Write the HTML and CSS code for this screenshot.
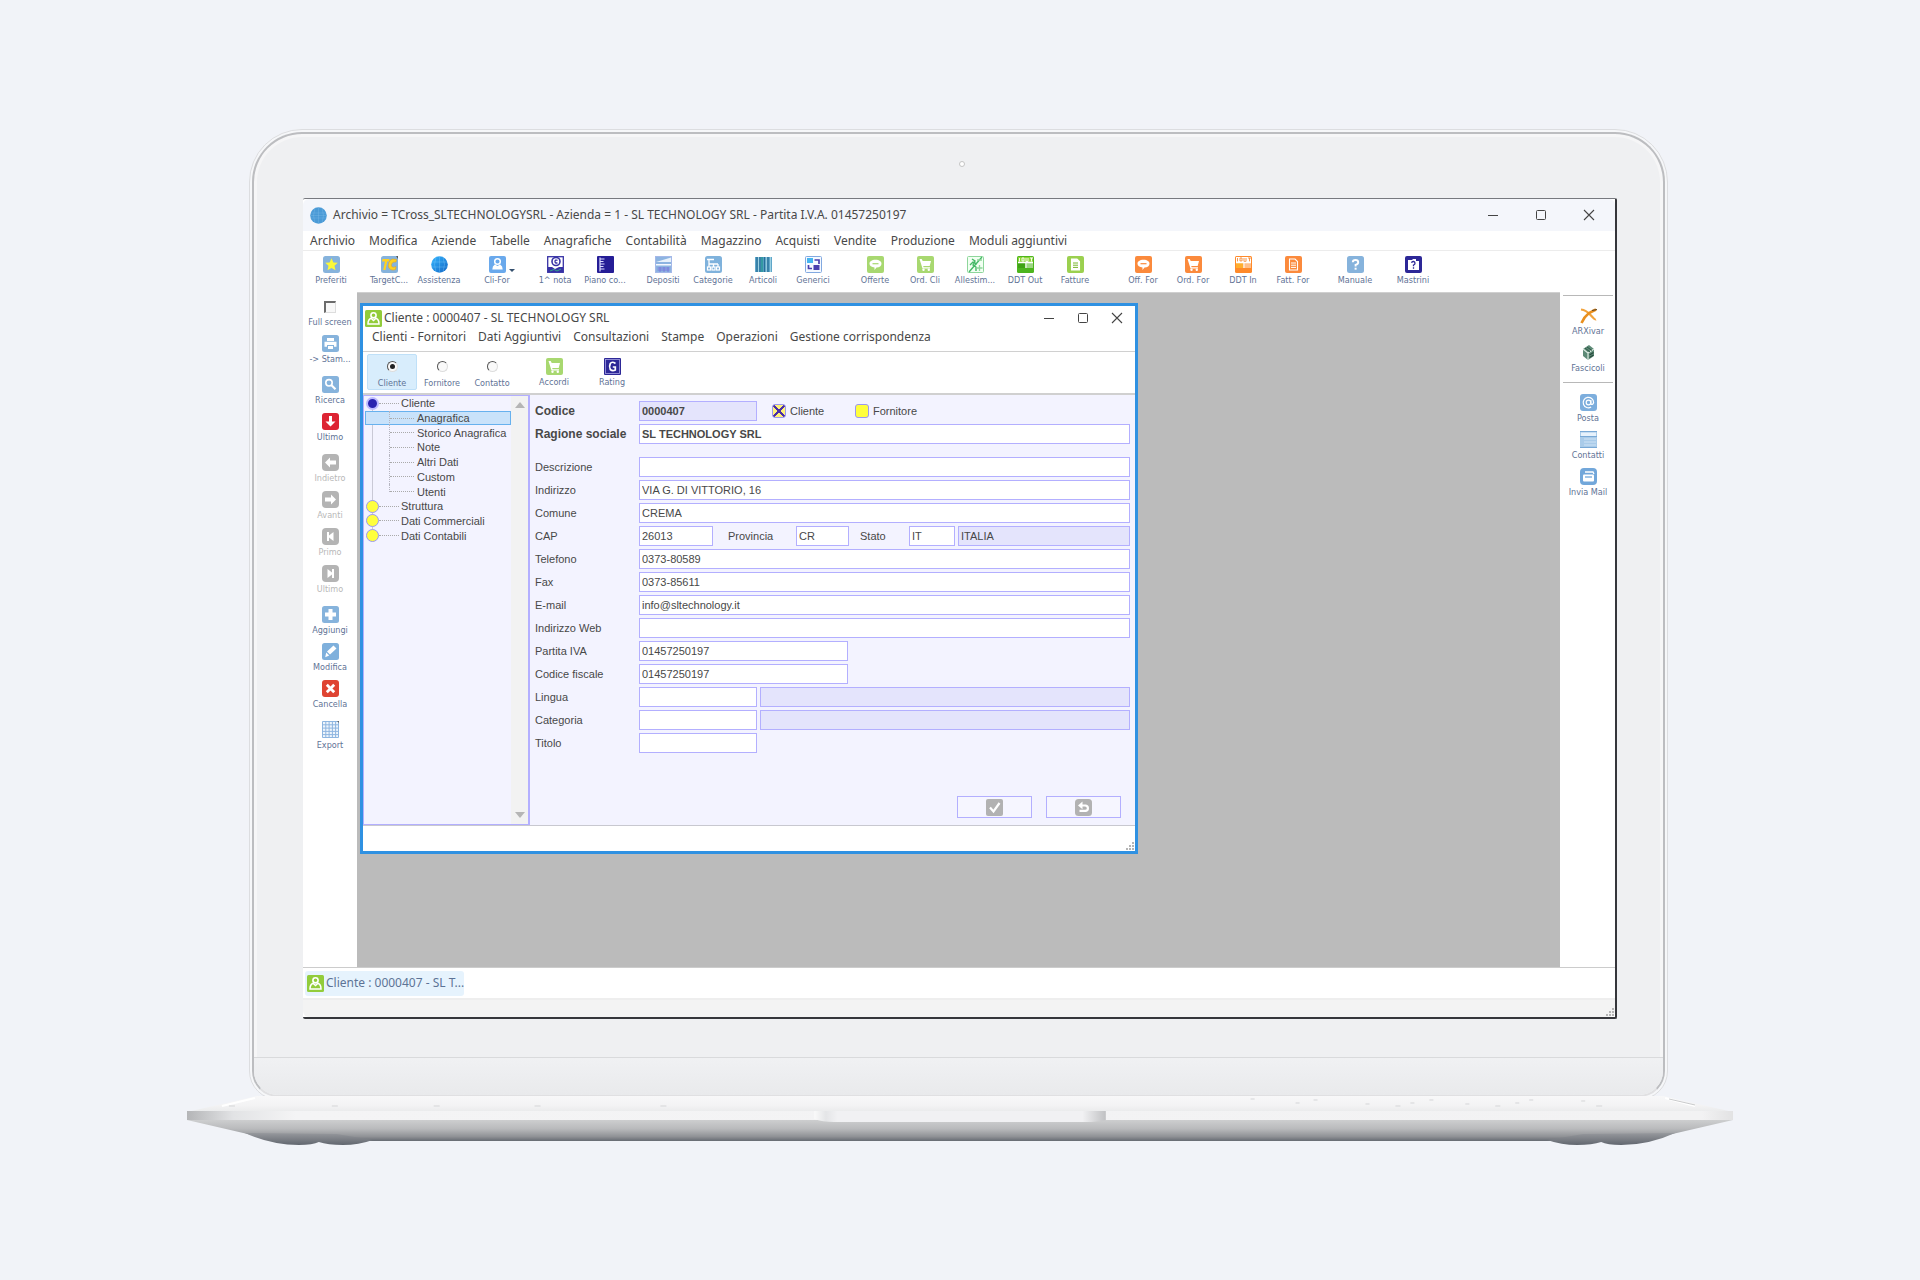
FILE: index.html
```html
<!DOCTYPE html>
<html lang="it">
<head>
<meta charset="utf-8">
<title>Archivio TCross - Cliente 0000407</title>
<link rel="stylesheet" href="styles.css">
</head>
<body>
<svg class="defs" aria-hidden="true">
  <defs>
    <linearGradient id="globeFill" x1="0" y1="0" x2="1" y2="1"><stop offset="0" stop-color="#35b6ff"/><stop offset="1" stop-color="#1265c4"/></linearGradient>
    <symbol id="i-star" viewBox="0 0 17 17"><rect width="17" height="17" rx="2.5" fill="#86b3dc"/><path d="M8.500 2.200l1.900 4.200 4.400.4-3.300 3 1 4.500-4-2.400-4 2.400 1-4.500-3.300-3 4.400-.4z" fill="#fbf838"/></symbol>
    <symbol id="i-target" viewBox="0 0 17 17"><rect width="17" height="17" rx="2.500" fill="#86b3dc"/><path d="M1.500 3h7L8 5.500H6.200L4.500 14H2.200L4 5.500H1z" fill="#ffd21f"/><path d="M15.500 3.500L12 3C8.500 3.500 7 7 7.500 11c1 3 4.500 3.500 7 2.500l.5-3c-2 1-4 1-4.500-.5C10.500 7 11.500 6 15 6z" fill="#ffd21f" stroke="#e8a51c" stroke-width=".6"/><path d="M15 0l2 0v3z" fill="#555"/></symbol>
    <symbol id="i-globe" viewBox="0 0 17 17"><circle cx="8.500" cy="8.500" r="8.300" fill="url(#globeFill)"/><path d="M1 6h15M1 11h15M8.500 0v17M5 1Q2 8.500 5 16M12 1q3 7.500 0 15" fill="none" stroke="#8fd6ff" stroke-width=".5" opacity=".6"/></symbol>
    <symbol id="i-world" viewBox="0 0 17 17"><circle cx="8.500" cy="8.500" r="8.300" fill="#4a9ad6"/><path d="M1 6h15M0 8.500h17M1 11h15M8.500 0v17M5 1Q2 8.500 5 16M12 1q3 7.500 0 15" fill="none" stroke="#7fbde8" stroke-width=".6" opacity=".6"/></symbol>
    <symbol id="i-user" viewBox="0 0 17 17"><rect width="17" height="17" rx="2" fill="#6aa9ec"/><circle cx="8.500" cy="5.500" r="2.800" fill="none" stroke="#fff" stroke-width="1.500"/><path d="M5.800 8.500Q3.300 9.800 3.300 13.500h10.400q0-3.700-2.500-5L8.500 10z" fill="#fff"/></symbol>
    <symbol id="i-client" viewBox="0 0 17 17"><rect width="17" height="17" rx="1.500" fill="#92cc3b"/><circle cx="8.500" cy="5.300" r="2.600" fill="none" stroke="#fff" stroke-width="1.600"/><path d="M6 8.300Q3 9.500 3 14h11q0-4.500-3-5.700L8.500 10.500z" fill="none" stroke="#fff" stroke-width="1.500"/></symbol>
    <symbol id="i-note" viewBox="0 0 17 17"><rect x=".7" y=".7" width="15.600" height="15.600" fill="#fff" stroke="#3732a5" stroke-width="1.300"/><circle cx="9" cy="5.500" r="4" fill="#fff" stroke="#3732a5" stroke-width="1.600"/><path d="M10.500 4.300Q8 3.500 8 5.500t2.500 1.300" fill="none" stroke="#3732a5" stroke-width="1.300"/><path d="M1 11h4l3 2 4-2h4v5H1z" fill="#3732a5"/><path d="M3 15l4-1.500 3 1.500 4-2" stroke="#35a58c" fill="none"/></symbol>
    <symbol id="i-plan" viewBox="0 0 17 17"><rect width="17" height="17" rx="1" fill="#251d96"/><path d="M3 1.500v14M3.500 3h4M3.500 5.500h3M3.500 8h4M3.500 10.500h3M3.500 13h4" stroke="#dcdcff" stroke-width="1.200"/></symbol>
    <symbol id="i-depot" viewBox="0 0 17 17"><rect x=".5" y=".5" width="16" height="16" fill="#8db4e1" stroke="#a4b8e8"/><path d="M1 6l15-4.500V6z" fill="#e8f1fb"/><path d="M1 8h15v1.500H1z" fill="#f5f8ff"/><path d="M2.500 12h12M2.500 14h12M5 11v5M9 11v5M13 11v5" stroke="#7878dd" stroke-width=".9"/></symbol>
    <symbol id="i-cat" viewBox="0 0 17 17"><rect width="17" height="17" rx="2.500" fill="#7fb2dc"/><path d="M2 3.500h7M4 3v5M4 8h9M4 8v3M8.500 8v3M13 8v3" stroke="#fff" stroke-width="1.300" fill="none"/><g fill="none" stroke="#fff" stroke-width="1.200"><rect x="2.500" y="11" width="3" height="3"/><rect x="7" y="11" width="3" height="3"/><rect x="11.500" y="11" width="3" height="3"/></g></symbol>
    <symbol id="i-bars" viewBox="0 0 17 17"><rect y="1" width="17" height="15" fill="#5fa6c9"/><path d="M2 1v15M5 1v15M9.500 1v15M13 1v15" stroke="#266f99" stroke-width="1.300"/><path d="M3.500 1v15M11.300 1v15M15.500 1v15" stroke="#afdcea" stroke-width=".8"/><path d="M7 1v15" stroke="#269494" stroke-width="1.500"/></symbol>
    <symbol id="i-gen" viewBox="0 0 17 17"><rect x=".5" y=".5" width="16" height="16" rx="1" fill="#f5f9ff" stroke="#82a9e0"/><rect x="2" y="2" width="6" height="5" fill="#45b4ef"/><rect x="8.500" y="9" width="6" height="5" fill="#4a3fae"/><path d="M9.500 4h4.500V8M7 12.500H3.500V9" fill="none" stroke="#4a3fae" stroke-width="1.700"/></symbol>
    <symbol id="i-offer" viewBox="0 0 17 17"><rect width="17" height="17" rx="2" fill="var(--tile)"/><path d="M8.500 3.800c3.800 0 6 1.700 6 3.900s-2 3.900-5 3.900L7.500 14v-2.500C4.500 11.200 2.500 9.700 2.500 7.700c0-2.200 2.200-3.900 6-3.900z" fill="#fff"/><path d="M5.500 7.700h6" stroke="var(--tile)" stroke-width="1.200"/></symbol>
    <symbol id="i-cart" viewBox="0 0 17 17"><rect width="17" height="17" rx="2" fill="var(--tile)"/><path d="M2.500 3h2.200l1 2H14l-1.300 5H6.200l.4 1.200H13V12.500H5.500z" fill="#fff"/><circle cx="6.500" cy="13.800" r="1.200" fill="#fff"/><circle cx="11.800" cy="13.800" r="1.200" fill="#fff"/></symbol>
    <symbol id="i-allest" viewBox="0 0 17 17"><rect x=".5" y=".5" width="16" height="16" rx="1" fill="#f1fff2" stroke="#8ed69b"/><path d="M15 1L2 16M5 3l3 2-2 4 3 2v4M3 9l3-3 4 2" fill="none" stroke="#45b966" stroke-width="1.400"/><path d="M9.500 12h6M12.500 9v6M10 4h5" stroke="#8ed69b" stroke-width="1.300"/></symbol>
    <symbol id="i-ddt" viewBox="0 0 17 17"><rect width="17" height="17" rx="1.500" fill="var(--tile)"/><rect x="1" y="1" width="15" height="5" fill="var(--band)"/><path d="M2.500 2v3.500M5 2h2v3H5zM9 2v3.500h2V2M13 2h3M14.500 2v3.500" stroke="var(--mark)" fill="none" stroke-width=".9"/><path d="M1 7h7v5H1z" fill="var(--box)"/><path d="M10 7h6v5h-6z" fill="#fff" opacity=".45"/><path d="M9 6.500V12M1 6.500h15" stroke="#fff" stroke-width="1.400"/></symbol>
    <symbol id="i-doc" viewBox="0 0 17 17"><rect width="17" height="17" rx="2" fill="var(--tile)"/><path d="M4.500 3h5.500l2.500 2.500V14h-8z" fill="var(--page)" stroke="#fff" stroke-width="1.100"/><path d="M6 7h5M6 9.200h5M6 11.400h5" stroke="var(--lines)" stroke-width="1"/></symbol>
    <symbol id="i-help" viewBox="0 0 17 17"><rect width="17" height="17" rx="2.500" fill="#86b3dc"/><path d="M5.800 6.300Q5.800 4 8.500 4t2.700 2.200Q11.200 8 8.600 8.800V10.500" fill="none" stroke="#fff" stroke-width="1.900"/><rect x="7.600" y="11.700" width="2" height="2" fill="#fff"/></symbol>
    <symbol id="i-mast" viewBox="0 0 17 17"><rect width="17" height="17" rx="2" fill="#2d2897"/><path d="M3 4h4l1-1h3v2h3v9H3z" fill="#fff"/><path d="M6.500 6.800Q7 5.300 8.500 5.500t1.500 1.700Q10 8.500 8.500 9v1.200M8.500 11.200v1.500" fill="none" stroke="#2d2897" stroke-width="1.300"/></symbol>
    <symbol id="i-print" viewBox="0 0 17 17"><rect width="17" height="17" rx="2.500" fill="#86b3dc"/><path d="M5 3h7v3H5zM2.500 6.800h12v5H12V10H5v1.800H2.500zM6 11h5v3H6z" fill="#fff"/></symbol>
    <symbol id="i-find" viewBox="0 0 17 17"><rect width="17" height="17" rx="2.500" fill="#86b3dc"/><circle cx="7" cy="6.800" r="3.200" fill="none" stroke="#fff" stroke-width="1.600"/><path d="M9.500 9.300l4 4" stroke="#fff" stroke-width="2.200"/></symbol>
    <symbol id="i-down" viewBox="0 0 17 17"><rect width="17" height="17" rx="3" fill="#dd2433"/><path d="M7 3h3v5.500h3.500l-5 5-5-5H7z" fill="#fff"/></symbol>
    <symbol id="i-left" viewBox="0 0 17 17"><rect width="17" height="17" rx="4" fill="#b4b4b4"/><path d="M8 3.500v3h6v4H8v3l-5-5z" fill="#fff"/></symbol>
    <symbol id="i-right" viewBox="0 0 17 17"><rect width="17" height="17" rx="4" fill="#b4b4b4"/><path d="M9 3.500v3H3v4h6v3l5-5z" fill="#fff"/></symbol>
    <symbol id="i-first" viewBox="0 0 17 17"><rect width="17" height="17" rx="4" fill="#b4b4b4"/><path d="M5 4h2v3.500L11.500 4v9L7 9.500V13H5z" fill="#fff"/></symbol>
    <symbol id="i-last" viewBox="0 0 17 17"><rect width="17" height="17" rx="4" fill="#b4b4b4"/><path d="M5.500 4L10 7.500V4h2v9h-2V9.500L5.500 13z" fill="#fff"/></symbol>
    <symbol id="i-plus" viewBox="0 0 17 17"><rect width="17" height="17" rx="2.500" fill="#86b3dc"/><path d="M6.500 3h4v3.500H14v4h-3.500V14h-4v-3.500H3v-4h3.500z" fill="#fff"/></symbol>
    <symbol id="i-edit" viewBox="0 0 17 17"><rect width="17" height="17" rx="2.500" fill="#7fb0dc"/><path d="M11.500 2.500l3 3-6.500 6-3-3zM4.200 9.500l3 3-4 1.800z" fill="#fff"/></symbol>
    <symbol id="i-del" viewBox="0 0 17 17"><rect width="17" height="17" rx="3" fill="#df4432"/><path d="M4.800 4.800l7.400 7.400M12.200 4.800l-7.400 7.400" stroke="#fff" stroke-width="2.800"/></symbol>
    <symbol id="i-grid" viewBox="0 0 17 17"><path d="M.5.500h16v16H.5zM3.800.5v16M7.100.5v16M10.400.5v16M13.600.5v16M.5 3.800h16M.5 7.100h16M.5 10.400h16M.5 13.600h16" fill="#eef5fc" stroke="#8eb6e0"/><path d="M15 0h2v2z" fill="#666"/></symbol>
    <symbol id="i-arx" viewBox="0 0 17 17"><path d="M1 2.500Q6 3 10.500 8T16 12.500" fill="none" stroke="#f2a33c" stroke-width="2.200"/><path d="M16 2.500L9 6Q4 10 1.500 16" fill="none" stroke="#e98f1e" stroke-width="2.600"/><path d="M12 3.500l5-1" stroke="#5d4320" stroke-width="1.200"/></symbol>
    <symbol id="i-files" viewBox="0 0 17 17"><path d="M3 5l6-4 5 4v7l-6 4-5-4z" fill="#5d8a76"/><path d="M3 5l5 4v7M8 9l6-4" fill="none" stroke="#dbe9e0" stroke-width="1.200"/><path d="M5 4l5 4M7 3l5 3.500" stroke="#2c5745"/><path d="M9.500 11l4-2.500M9.500 13.500l4-2.500" stroke="#274b3c" stroke-width="1.300"/></symbol>
    <symbol id="i-at" viewBox="0 0 17 17"><rect width="17" height="17" rx="3" fill="#7daedd"/><circle cx="8.500" cy="8.500" r="2.300" fill="none" stroke="#fff" stroke-width="1.200"/><path d="M10.900 6v4.200q2 1 2.700-1.700a5.200 5.200 0 1 0-2.500 4.500" fill="none" stroke="#fff" stroke-width="1.200"/></symbol>
    <symbol id="i-contacts" viewBox="0 0 17 17"><rect width="17" height="17" fill="#a9cbe9"/><path d="M0 .5h17M0 5.500h17M0 16.500h17" stroke="#79a9d6"/><rect x="1" y="1.500" width="15" height="3.500" fill="#e7f2fc"/><path d="M4 8h12M4 11h12M4 14h12" stroke="#cfe3f5"/></symbol>
    <symbol id="i-mail" viewBox="0 0 17 17"><rect width="17" height="17" rx="4" fill="#72a7da"/><rect x="3" y="6.500" width="11" height="7" rx="1" fill="#fff"/><path d="M5 4h8l1 2M5 9h5" stroke="#fff" stroke-width="1.300" fill="none"/><path d="M5 9h7" stroke="#72a7da" stroke-width="1.300"/></symbol>
    <symbol id="i-rating" viewBox="0 0 17 17"><rect width="17" height="17" rx="1" fill="#2d2897"/><rect x="1.500" y="1.500" width="14" height="14" fill="none" stroke="#a7a4e3" stroke-width=".8"/><path d="M11.500 5.500Q8 3 6.300 5.500 4.800 8.500 6.300 11.500 8.500 13.500 11.300 12V9H8.800" fill="none" stroke="#fff" stroke-width="1.700"/></symbol>
    <symbol id="i-ok" viewBox="0 0 17 17"><rect width="17" height="17" rx="2" fill="#b2b2b2"/><path d="M4 8.500l3.500 4L13.500 4" fill="none" stroke="#fff" stroke-width="2.200"/></symbol>
    <symbol id="i-undo" viewBox="0 0 17 17"><rect width="17" height="17" rx="3.500" fill="#b2b2b2"/><path d="M7.500 2.500v3H11q3 .5 3 3.700t-3 3.800H4.500v-2.200H10q1.800 0 1.800-1.600T10 7.600H7.500v2.700L3 6.400z" fill="#fff"/></symbol>
    <symbol id="i-min" viewBox="0 0 12 12"><path d="M1 6.500h10" stroke="#444"/></symbol>
    <symbol id="i-max" viewBox="0 0 12 12"><rect x="1.500" y="1.500" width="9" height="9" rx="1" fill="none" stroke="#444"/></symbol>
    <symbol id="i-close" viewBox="0 0 12 12"><path d="M1 1l10 10M11 1L1 11" stroke="#444" stroke-width="1.100"/></symbol>
    <symbol id="i-grip" viewBox="0 0 10 10"><path d="M7 1h2v2H7zM4 4h2v2H4zM7 4h2v2H7zM1 7h2v2H1zM4 7h2v2H4zM7 7h2v2H7z" fill="#b5b5b5"/></symbol>
  </defs>
</svg>

<main class="laptop">
  <div class="lid">
    <div class="bezel">
      <span class="camera"></span>
      <div class="app">
        <header class="titlebar">
          <svg class="app-icon"><use href="#i-world"/></svg>
          <h1 class="app-title">Archivio = TCross_SLTECHNOLOGYSRL - Azienda = 1 - SL TECHNOLOGY SRL - Partita I.V.A. 01457250197</h1>
          <div class="controls controls-app">
            <button aria-label="Riduci a icona"><svg><use href="#i-min"/></svg></button>
            <button aria-label="Ingrandisci"><svg><use href="#i-max"/></svg></button>
            <button aria-label="Chiudi"><svg><use href="#i-close"/></svg></button>
          </div>
        </header>
        <nav class="menubar">
          <button>Archivio</button><button>Modifica</button><button>Aziende</button><button>Tabelle</button><button>Anagrafiche</button><button>Contabilità</button><button>Magazzino</button><button>Acquisti</button><button>Vendite</button><button>Produzione</button><button>Moduli aggiuntivi</button>
        </nav>
        <div class="toolbar">
          <button class="tool"><svg><use href="#i-star"/></svg>Preferiti</button>
          <button class="tool apart"><svg><use href="#i-target"/></svg>TargetC...</button>
          <button class="tool"><svg><use href="#i-globe"/></svg>Assistenza</button>
          <button class="tool apart has-menu"><svg><use href="#i-user"/></svg>Cli-For</button>
          <button class="tool apart"><svg><use href="#i-note"/></svg>1^ nota</button>
          <button class="tool"><svg><use href="#i-plan"/></svg>Piano co...</button>
          <button class="tool apart"><svg><use href="#i-depot"/></svg>Depositi</button>
          <button class="tool"><svg><use href="#i-cat"/></svg>Categorie</button>
          <button class="tool"><svg><use href="#i-bars"/></svg>Articoli</button>
          <button class="tool"><svg><use href="#i-gen"/></svg>Generici</button>
          <button class="tool far sales"><svg><use href="#i-offer"/></svg>Offerte</button>
          <button class="tool sales"><svg><use href="#i-cart"/></svg>Ord. Cli</button>
          <button class="tool"><svg><use href="#i-allest"/></svg>Allestim...</button>
          <button class="tool ddt-out"><svg><use href="#i-ddt"/></svg>DDT Out</button>
          <button class="tool invoice"><svg><use href="#i-doc"/></svg>Fatture</button>
          <button class="tool farther buy"><svg><use href="#i-offer"/></svg>Off. For</button>
          <button class="tool buy"><svg><use href="#i-cart"/></svg>Ord. For</button>
          <button class="tool ddt-in"><svg><use href="#i-ddt"/></svg>DDT In</button>
          <button class="tool buy"><svg><use href="#i-doc"/></svg>Fatt. For</button>
          <button class="tool far"><svg><use href="#i-help"/></svg>Manuale</button>
          <button class="tool apart"><svg><use href="#i-mast"/></svg>Mastrini</button>
        </div>
        <div class="body">
          <aside class="side side-left">
            <label class="side-check"><input type="checkbox" class="box3d">Full screen</label>
            <div class="side-group">
              <button class="tool"><svg><use href="#i-print"/></svg>-&gt; Stam...</button>
            </div>
            <div class="side-group">
              <button class="tool"><svg><use href="#i-find"/></svg>Ricerca</button>
              <button class="tool"><svg><use href="#i-down"/></svg>Ultimo</button>
            </div>
            <div class="side-group">
              <button class="tool" disabled><svg><use href="#i-left"/></svg>Indietro</button>
              <button class="tool" disabled><svg><use href="#i-right"/></svg>Avanti</button>
              <button class="tool" disabled><svg><use href="#i-first"/></svg>Primo</button>
              <button class="tool" disabled><svg><use href="#i-last"/></svg>Ultimo</button>
            </div>
            <div class="side-group">
              <button class="tool"><svg><use href="#i-plus"/></svg>Aggiungi</button>
              <button class="tool"><svg><use href="#i-edit"/></svg>Modifica</button>
              <button class="tool"><svg><use href="#i-del"/></svg>Cancella</button>
            </div>
            <div class="side-group">
              <button class="tool"><svg><use href="#i-grid"/></svg>Export</button>
            </div>
          </aside>

          <div class="workspace">
            <section class="window">
              <header class="window-title">
                <svg class="app-icon"><use href="#i-client"/></svg>
                <h2>Cliente : 0000407 - SL TECHNOLOGY SRL</h2>
                <div class="controls controls-window">
                  <button aria-label="Riduci a icona"><svg><use href="#i-min"/></svg></button>
                  <button aria-label="Ingrandisci"><svg><use href="#i-max"/></svg></button>
                  <button aria-label="Chiudi"><svg><use href="#i-close"/></svg></button>
                </div>
              </header>
              <nav class="menubar window-menu">
                <button>Clienti - Fornitori</button><button>Dati Aggiuntivi</button><button>Consultazioni</button><button>Stampe</button><button>Operazioni</button><button>Gestione corrispondenza</button>
              </nav>
              <div class="window-tools">
                <label class="mode"><input type="radio" name="mode" checked>Cliente</label>
                <label class="mode"><input type="radio" name="mode">Fornitore</label>
                <label class="mode"><input type="radio" name="mode">Contatto</label>
                <button class="tool far sales"><svg><use href="#i-cart"/></svg>Accordi</button>
                <button class="tool apart"><svg><use href="#i-rating"/></svg>Rating</button>
              </div>
              <div class="window-body">
                <div class="tree">
                  <ul class="tree-list">
                    <li class="node open"><span class="branch"></span>Cliente</li>
                    <li class="leaf selected"><span class="branch"></span>Anagrafica</li>
                    <li class="leaf"><span class="branch"></span>Storico Anagrafica</li>
                    <li class="leaf"><span class="branch"></span>Note</li>
                    <li class="leaf"><span class="branch"></span>Altri Dati</li>
                    <li class="leaf"><span class="branch"></span>Custom</li>
                    <li class="leaf last"><span class="branch"></span>Utenti</li>
                    <li class="node"><span class="branch"></span>Struttura</li>
                    <li class="node"><span class="branch"></span>Dati Commerciali</li>
                    <li class="node"><span class="branch"></span>Dati Contabili</li>
                  </ul>
                  <div class="scrollbar"><span class="arrow-up"></span><span class="arrow-down"></span></div>
                </div>
                <form class="form">
                  <div class="row strong"><label for="codice">Codice</label>
                    <input id="codice" class="w-code shaded" value="0000407" readonly>
                    <label class="tick tick-first"><input type="checkbox" checked>Cliente</label>
                    <label class="tick"><input type="checkbox">Fornitore</label>
                  </div>
                  <div class="row strong spaced"><label for="ragione">Ragione sociale</label><input id="ragione" class="grow" value="SL TECHNOLOGY SRL"></div>
                  <div class="row"><label for="descr">Descrizione</label><input id="descr" class="grow"></div>
                  <div class="row"><label for="ind">Indirizzo</label><input id="ind" class="grow" value="VIA G. DI VITTORIO, 16"></div>
                  <div class="row"><label for="comune">Comune</label><input id="comune" class="grow" value="CREMA"></div>
                  <div class="row"><label for="cap">CAP</label><input id="cap" class="w-cap" value="26013">
                    <label class="inline-label prov" for="prov">Provincia</label><input id="prov" class="w-prov" value="CR">
                    <label class="inline-label stato" for="stato">Stato</label><input id="stato" class="w-stato" value="IT"><input class="grow shaded" aria-label="Nome stato" value="ITALIA" readonly></div>
                  <div class="row"><label for="tel">Telefono</label><input id="tel" class="grow" value="0373-80589"></div>
                  <div class="row"><label for="fax">Fax</label><input id="fax" class="grow" value="0373-85611"></div>
                  <div class="row"><label for="email">E-mail</label><input id="email" class="grow" value="info@sltechnology.it"></div>
                  <div class="row"><label for="web">Indirizzo Web</label><input id="web" class="grow"></div>
                  <div class="row"><label for="piva">Partita IVA</label><input id="piva" class="w-tax" value="01457250197"></div>
                  <div class="row"><label for="cf">Codice fiscale</label><input id="cf" class="w-tax" value="01457250197"></div>
                  <div class="row"><label for="lingua">Lingua</label><input id="lingua" class="w-code"><input class="grow shaded" aria-label="Descrizione lingua" readonly></div>
                  <div class="row"><label for="categoria">Categoria</label><input id="categoria" class="w-code"><input class="grow shaded" aria-label="Descrizione categoria" readonly></div>
                  <div class="row"><label for="titolo">Titolo</label><input id="titolo" class="w-code"></div>
                  <div class="actions">
                    <button type="button" aria-label="Conferma"><svg><use href="#i-ok"/></svg></button>
                    <button type="button" aria-label="Annulla"><svg><use href="#i-undo"/></svg></button>
                  </div>
                </form>
              </div>
              <footer class="window-foot"><svg class="grip"><use href="#i-grip"/></svg></footer>
            </section>
          </div>

          <aside class="side side-right">
            <div class="side-group ruled">
              <button class="tool"><svg><use href="#i-arx"/></svg>ARXivar</button>
              <button class="tool"><svg><use href="#i-files"/></svg>Fascicoli</button>
            </div>
            <div class="side-group ruled">
              <button class="tool"><svg><use href="#i-at"/></svg>Posta</button>
              <button class="tool"><svg><use href="#i-contacts"/></svg>Contatti</button>
              <button class="tool"><svg><use href="#i-mail"/></svg>Invia Mail</button>
            </div>
          </aside>
        </div>
        <div class="taskbar">
          <button class="task"><svg class="app-icon"><use href="#i-client"/></svg>Cliente : 0000407 - SL T...</button>
        </div>
        <footer class="statusbar"><svg class="grip"><use href="#i-grip"/></svg></footer>
      </div>
    </div>
    <div class="chin"></div>
  </div>
  <svg class="base" viewBox="0 0 1548 50" preserveAspectRatio="none" aria-hidden="true">
    <defs>
      <linearGradient id="deck" x1="0" y1="0" x2="0" y2="1"><stop offset="0" stop-color="#f8f8f9"/><stop offset=".6" stop-color="#f3f3f4"/><stop offset="1" stop-color="#e9eaeb"/></linearGradient>
      <linearGradient id="edge" x1="0" y1="0" x2="1" y2="0"><stop offset="0" stop-color="#b4b5b7"/><stop offset=".03" stop-color="#e2e3e5"/><stop offset=".07" stop-color="#f4f4f5"/><stop offset=".98" stop-color="#f2f2f3"/><stop offset="1" stop-color="#e2e2e3"/></linearGradient>
      <linearGradient id="under" x1="0" y1="24" x2="0" y2="46" gradientUnits="userSpaceOnUse"><stop offset="0" stop-color="#cdcecf"/><stop offset=".4" stop-color="#b9babc"/><stop offset=".75" stop-color="#909296"/><stop offset="1" stop-color="#5d626b"/></linearGradient>
      <linearGradient id="foot" x1="0" y1="36" x2="0" y2="50" gradientUnits="userSpaceOnUse"><stop offset="0" stop-color="#9b9da1"/><stop offset="1" stop-color="#5d626b"/></linearGradient>
      <linearGradient id="notch" x1="0" y1="0" x2="1" y2="0"><stop offset="0" stop-color="#fafafa"/><stop offset=".04" stop-color="#e4e5e7"/><stop offset=".08" stop-color="#f1f1f3"/><stop offset=".92" stop-color="#f1f1f3"/><stop offset="1" stop-color="#c0c1c3"/></linearGradient>
    </defs>
    <path d="M70 0H1478L1548 16H0z" fill="url(#deck)"/>
    <path d="M68 2L35 10M1480 2L1510 10" stroke="#fff" stroke-width="2"/>
    <path d="M1484 3l26 6" stroke="#c9cacc" stroke-width="1"/>
    <g stroke="#d5d6d8" stroke-width="1"><path d="M42 10h6M145 10h6M247 10h6M348 10h6M474 10h6M1065 3h4M1110 7h4M1128 4h4M1180 8h4M1210 10h5M1225 7h4M1244 4h4M1280 8h4M1310 10h5M1330 7h4M1344 4h4M1396 5h4M1411 10h6"/></g>
    <path d="M0 24L65 39L90 45H1460L1483 39L1548 24z" fill="url(#under)"/>
    <path d="M58 37Q84 49 112 49q14 0 20-3q9 3 24 3q16 0 30-5L150 38zM1490 37Q1464 49 1436 49q-14 0-20-3q-9 3-24 3q-16 0-30-5L1398 38z" fill="url(#foot)"/>
    <path d="M0 15H1548V24H0z" fill="url(#edge)"/>
    <path d="M628 15H920V24Q912 26 900 26H648Q636 26 628 23z" fill="url(#notch)"/>
  </svg>
</main>
</body>
</html>
```

FILE: styles.css
```css
*, *::before, *::after { box-sizing: border-box; }

:root {
  --ui: "Noto Sans", "Open Sans", sans-serif;
  --small: "DejaVu Sans Condensed", "DejaVu Sans", sans-serif;
  --form: "Liberation Sans", sans-serif;
  --violet: #b3afff;
  --panel: #f3f3ff;
  --shade: #e4e4fc;
}

body {
  margin: 0;
  background: #f1f3f8;
  font-family: var(--ui);
  color: #484848;
}

h1, h2, ul { margin: 0; padding: 0; font-weight: 400; }
button { border: 0; padding: 0; background: none; font: inherit; color: inherit; }
.defs { position: absolute; width: 0; height: 0; }

/* laptop shell */
.laptop {
  display: flex;
  flex-direction: column;
  min-height: 100vh;
  padding: 132px 187px 134px;
}
.lid {
  flex: 1;
  display: flex;
  flex-direction: column;
  margin: 0 68px 0 65px;
  border: 2px solid #bcbdc0;
  border-bottom-color: #e0e0e2;
  border-radius: 50px 50px 26px 26px;
  outline: 1px solid #dcdde0;
  outline-offset: 2px;
  background: #eff0f2;
  box-shadow: inset 0 0 0 3px #f6f6f7, 0 0 0 3px #f6f7f9;
}
.bezel {
  flex: 1;
  display: flex;
  flex-direction: column;
  position: relative;
  padding: 64px 46px 38px 49px;
}
.camera {
  position: absolute;
  top: 27px;
  left: 50%;
  width: 6px;
  height: 6px;
  border: 1px solid #c4c4c4;
  border-radius: 50%;
  background: #fff;
}
.chin {
  height: 38px;
  border-top: 1px solid #d9dadc;
  border-radius: 0 0 24px 24px;
  background: linear-gradient(#f0f1f3, #e9eaec);
}
.base { display: block; width: 100%; height: 50px; margin-top: -1px; }

/* application frame */
.app {
  flex: 1;
  display: flex;
  flex-direction: column;
  border: solid #35363b;
  border-width: 1px 2px 2px 0;
  border-top-color: #77797f;
  border-radius: 2px;
  background: #fff;
}
.titlebar {
  display: flex;
  align-items: center;
  height: 32px;
  padding-left: 7px;
  background: #f4f6fb;
  border-radius: 6px 6px 0 0;
}
.app-icon { width: 17px; height: 17px; flex: none; }
.app-title { margin-left: 6px; font-size: 12px; line-height: 16px; white-space: nowrap; }
.controls { display: flex; margin-left: auto; }
.controls svg { display: block; width: 12px; height: 12px; }
.controls-app { gap: 36px; padding-right: 20px; }
.controls-window { gap: 22px; padding-right: 12px; }

.menubar {
  display: flex;
  gap: 14px;
  height: 20px;
  padding-left: 7px;
  border-bottom: 1px solid #ececec;
  font-size: 12px;
  line-height: 16px;
  white-space: nowrap;
}

.toolbar { display: flex; height: 41px; padding: 5px 0 0 3px; }
.tool {
  display: flex;
  flex-direction: column;
  align-items: center;
  gap: 1px;
  width: 50px;
  flex: none;
  font-family: var(--small);
  font-size: 9px;
  line-height: 12px;
  white-space: nowrap;
  color: #5f7396;
}
.tool svg { width: 17px; height: 17px; }
.tool:disabled { color: #b8b8b8; }
.apart { margin-left: 8px; }
.far { margin-left: 12px; }
.farther { margin-left: 18px; }
.has-menu { position: relative; }
.has-menu::after {
  content: "";
  position: absolute;
  top: 13px;
  right: 7px;
  border: solid transparent;
  border-width: 3px 3px 0;
  border-top-color: #35506e;
}
.sales { --tile: #a8d870; }
.buy { --tile: #fb8a3c; --page: #fb8a3c; --lines: #fff; }
.invoice { --tile: #9bd04f; --page: #fff; --lines: #79b52c; }
.ddt-out { --tile: #4db51e; --band: #8dd636; --mark: #fff; --box: #3fa314; }
.ddt-in { --tile: #ff8a2a; --band: #fff; --mark: #f58a35; --box: #ffae2e; }

.body { flex: 1; display: flex; }
.side { display: flex; flex-direction: column; gap: 4px; flex: none; }
.side .tool { width: 100%; height: 37px; }
.side-left { width: 54px; padding-top: 9px; }
.side-check {
  display: flex;
  flex-direction: column;
  align-items: center;
  gap: 3px;
  height: 30px;
  font-family: var(--small);
  font-size: 9px;
  line-height: 12px;
  white-space: nowrap;
  color: #5f7396;
}
.box3d {
  appearance: none;
  width: 12px;
  height: 12px;
  margin: 0;
  border: 1px solid #ddd;
  border-width: 2px 1px 1px 2px;
  border-color: #6b6b6b #ddd #ddd #6b6b6b;
  background: #f8f8f8;
}
.side-right { width: 55px; padding: 3px 2px 0 3px; gap: 1px; }
.ruled { padding: 11px 0 0; border-top: 1px solid #b8b8b8; }

.workspace { flex: 1; padding: 10px 3px; background: #bbb; border-top: 1px solid #cfcfcf; }

.taskbar {
  display: flex;
  align-items: center;
  height: 31px;
  padding: 0 2px;
  border-top: 1px solid #ccc;
}
.task {
  display: flex;
  align-items: center;
  gap: 2px;
  height: 25px;
  padding: 0 0 0 2px;
  border-radius: 3px;
  background: #e6f3fd;
  font-size: 12px;
  line-height: 16px;
  color: #5d7396;
}
.statusbar {
  display: flex;
  align-items: flex-end;
  justify-content: flex-end;
  height: 19px;
  border-top: 2px solid #eee;
  background: #f3f3f3;
  border-radius: 0 0 6px 6px;
}
.grip { width: 10px; height: 10px; }

/* customer window */
.window {
  width: 65%;
  min-width: 776px;
  border: 3px solid #2f91e2;
  background: #fff;
}
.window-title { display: flex; align-items: center; height: 24px; padding-left: 2px; }
.window-title h2 { margin-left: 2px; font-size: 12px; line-height: 16px; }
.window-menu { gap: 12px; height: 22px; padding-left: 9px; border-bottom: 1px solid #d0d0d0; line-height: 14px; }
.window-menu button { align-self: flex-start; }
.window-tools { display: flex; height: 43px; padding: 2px 4px 0; border-bottom: 2px solid #d0d0d0; }
.mode {
  display: flex;
  flex-direction: column;
  align-items: center;
  gap: 5px;
  width: 50px;
  height: 36px;
  padding-top: 6px;
  border: 1px solid transparent;
  border-radius: 2px;
  font-family: var(--small);
  font-size: 9px;
  line-height: 12px;
  color: #5f7396;
}
.mode:has(:checked) { border-color: #bfe0f8; background: #d8edfc; }
.mode input {
  appearance: none;
  display: grid;
  place-items: center;
  width: 11px;
  height: 11px;
  margin: 0;
  border: 1px solid;
  border-color: #555 #ddd #ddd #555;
  border-radius: 50%;
  background: #fafafa;
}
.mode input:checked::after {
  content: "";
  width: 5px;
  height: 5px;
  border-radius: 50%;
  background: #222;
}
.window-tools .tool { padding-top: 4px; }

.window-body {
  display: flex;
  background: var(--panel);
  border-bottom: 1px solid #c8c8d0;
  font-family: var(--form);
  font-size: 11px;
  line-height: 14px;
}
.tree {
  display: flex;
  width: 167px;
  flex: none;
  border: 1px solid var(--violet);
  border-right-width: 2px;
}
.tree-list {
  position: relative;
  flex: 1;
  align-self: flex-start;
  display: grid;
  grid-auto-rows: 1fr;
  height: 147px;
  list-style: none;
  white-space: nowrap;
}
.tree-list::before {
  content: "";
  position: absolute;
  top: 8px;
  bottom: 8px;
  left: 8px;
  border-left: 1px solid #c9c9d6;
}
.node, .leaf { display: flex; align-items: center; position: relative; }
.node { padding-left: 2px; }
.node::before {
  content: "";
  width: 13px;
  height: 13px;
  border: 1px solid #9b98f0;
  border-radius: 50%;
  background: #ffff3c;
}
.node.open::before { border: 2px solid #bdbaff; background: #2a23b0; }
.node .branch { width: 20px; border-top: 1px dotted #aaa; margin-right: 2px; }
.leaf { padding-left: 25px; }
.leaf .branch { align-self: stretch; width: 26px; margin-right: 2px; border-left: 1px dotted #b5b5c0; display: flex; align-items: center; }
.leaf .branch::after { content: ""; width: 24px; border-top: 1px dotted #aaa; }
.leaf.last .branch { align-self: flex-start; height: 8px; align-items: flex-end; }
.selected { background: #c9e2fa; box-shadow: inset 0 0 0 1px #67b1ee; margin-left: 1px; padding-left: 24px; }
.scrollbar {
  display: flex;
  flex-direction: column;
  align-items: center;
  justify-content: space-between;
  width: 17px;
  padding: 6px 0;
  background: #f2f2f2;
}
.arrow-up, .arrow-down { border: solid transparent; }
.arrow-up { border-width: 0 5px 6px; border-bottom-color: #b5b5b5; }
.arrow-down { border-width: 6px 5px 0; border-top-color: #b5b5b5; }

.form {
  flex: 1;
  display: flex;
  flex-direction: column;
  gap: 3px;
  padding: 6px 5px 7px;
}
.row { display: flex; align-items: center; gap: 3px; }
.row > label:first-child { width: 101px; flex: none; }
.strong > label:first-child { font-size: 12px; font-weight: 700; }
.strong > input { font-weight: 700; }
.spaced { margin-bottom: 10px; }
.row > input {
  min-width: 0;
  height: 20px;
  padding: 0 2px 1px;
  border: 1px solid var(--violet);
  background: #fff;
  font-family: inherit;
  font-size: 11px;
  color: inherit;
}
.row > .shaded { background: var(--shade); }
.grow { flex: 1; }
.w-code { width: 118px; }
.w-cap { width: 74px; }
.w-prov { width: 53px; }
.w-stato { width: 46px; }
.w-tax { width: 209px; }
.inline-label.prov { width: 65px; margin-left: 12px; }
.inline-label.stato { width: 46px; margin-left: 8px; }
.tick { display: flex; align-items: center; gap: 4px; width: 80px; }
.tick-first { margin-left: 12px; }
.tick input {
  appearance: none;
  display: grid;
  place-items: center;
  width: 14px;
  height: 14px;
  margin: 0;
  border: 1px solid #9b98f0;
  border-radius: 3px;
  background: #ffff3c;
}
.tick input:checked {
  background:
    linear-gradient(45deg, transparent 44%, #4a2fa8 44%, #4a2fa8 56%, transparent 56%),
    linear-gradient(-45deg, transparent 44%, #4a2fa8 44%, #4a2fa8 56%, transparent 56%),
    #fff27a;
}
.actions {
  display: flex;
  justify-content: flex-end;
  gap: 14px;
  margin-top: 40px;
  padding-right: 9px;
}
.actions button {
  display: grid;
  place-items: center;
  width: 75px;
  height: 22px;
  border: 1px solid var(--violet);
  background: #f6f6ff;
}
.actions svg { width: 17px; height: 17px; }
.window-foot { display: flex; align-items: flex-end; justify-content: flex-end; height: 25px; }
```
